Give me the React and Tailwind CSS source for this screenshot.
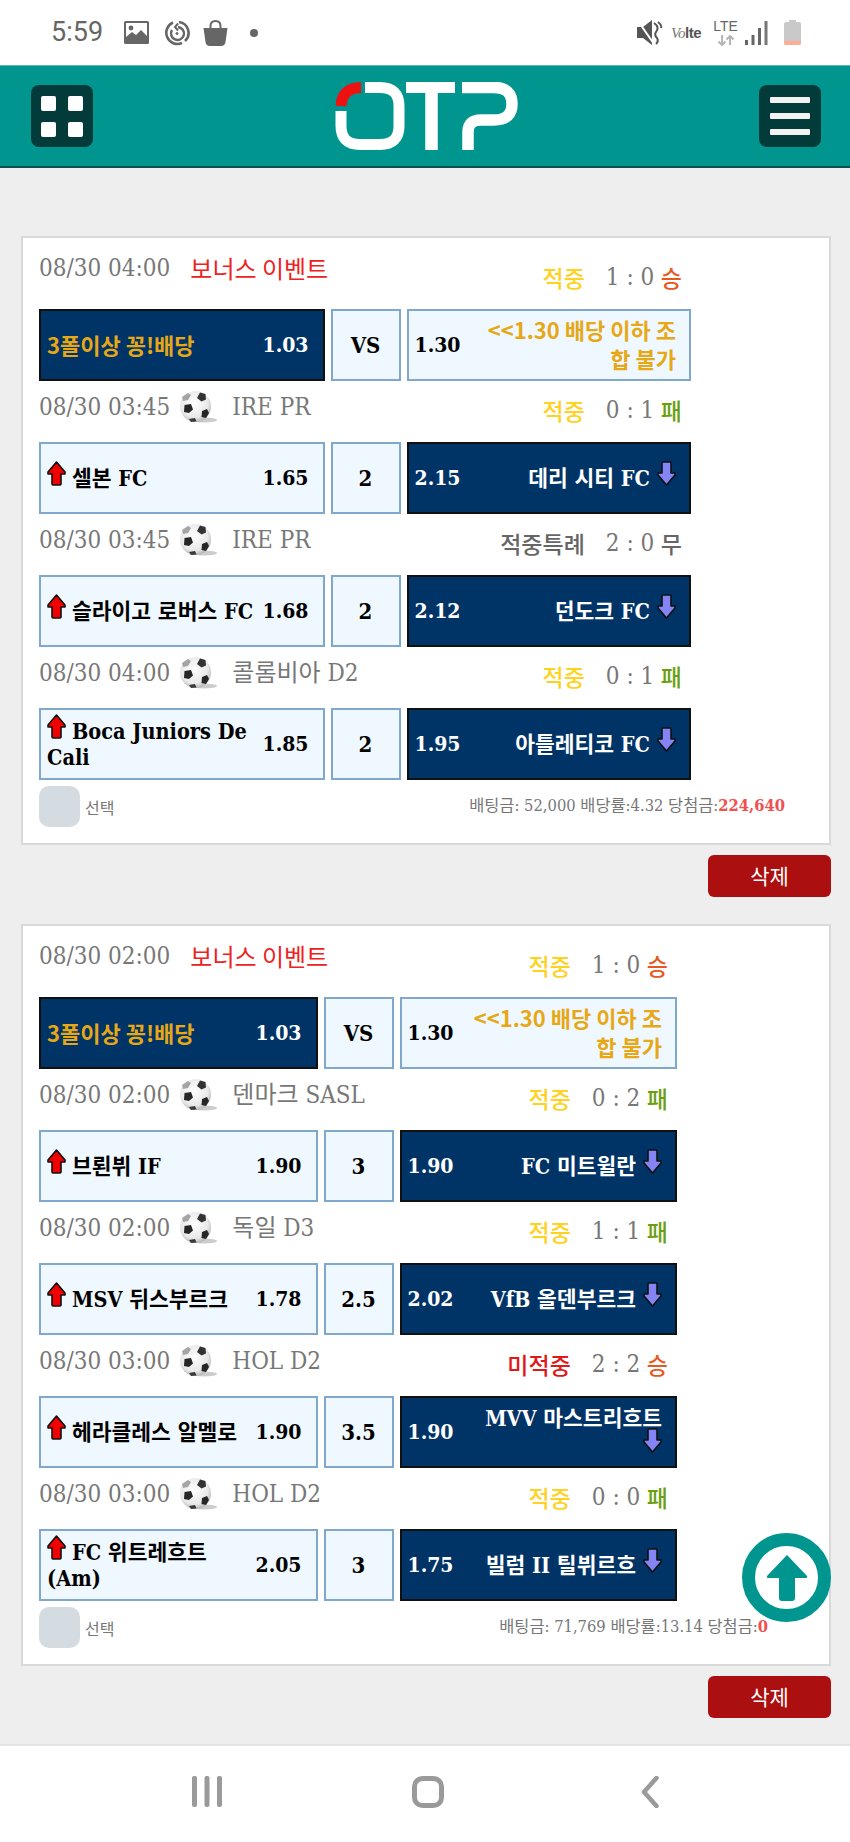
import React from "react";

const serif = "[font-family:'DejaVu_Serif_Condensed','DejaVu_Serif','Noto_Sans_CJK_KR',serif] [font-stretch:condensed]";
const sans = "[font-family:'Noto_Sans_CJK_KR','Noto_Sans',sans-serif]";

function UpArrow() {
  return (
    <svg width="19" height="25" viewBox="0 0 19 25" className="inline-block mr-[6px] -mt-[4px] align-baseline">
      <path d="M9.5 1 L18 11 V13 H14 V23 Q14 24 13 24 H6 Q5 24 5 23 V13 H1 V11 Z" fill="#f00000" stroke="#111" strokeWidth="1.6" strokeLinejoin="round" />
    </svg>
  );
}
function DownArrow() {
  return (
    <svg width="19" height="25" viewBox="0 0 19 25" className="inline-block ml-[7px] -mt-[4px] align-baseline">
      <path d="M9.5 24 L18 14 V12 H14 V2 Q14 1 13 1 H6 Q5 1 5 2 V12 H1 V14 Z" fill="#8484f4" stroke="#111" strokeWidth="1.6" strokeLinejoin="round" />
    </svg>
  );
}
function Ball() {
  return (
    <svg width="38" height="32" viewBox="0 0 38 32" className="shrink-0 ml-[9px]">
      <defs>
        <radialGradient id="bg" cx="0.45" cy="0.4" r="0.7">
          <stop offset="0" stopColor="#ffffff" />
          <stop offset="0.65" stopColor="#e8e8e8" />
          <stop offset="1" stopColor="#9a9a9a" />
        </radialGradient>
      </defs>
      <ellipse cx="25" cy="29" rx="13" ry="2.6" fill="#cccccc" />
      <circle cx="16.5" cy="15.5" r="15.5" fill="url(#bg)" />
      <path d="M21 1.5 L26.5 3 L27 8.5 L22.5 10.5 L18 7 Z" fill="#333" />
      <path d="M3 6 L9 2 L12 4 L9 9 L4 10 Z" fill="#a5a5a5" />
      <path d="M5.5 14 L12 13 L14 18.5 L10 22 L5 21 Z" fill="#262626" />
      <path d="M23 20 L28 18 L30 22 L27 27 L22.5 26 Z" fill="#262626" />
      <path d="M10 28 L16 27 L17.5 30.5 L12 31 Z" fill="#3a3a3a" />
    </svg>
  );
}

function Result({ label, labelClass, score, out, outClass }) {
  return (
    <div className={"flex items-center pr-[9px] " + serif}>
      <span className={"text-[23px] leading-[30px] font-medium " + sans + " " + labelClass}>{label}</span>
      <span className="ml-[21px] w-[48px] text-center whitespace-pre text-[24px] leading-[30px] text-[#777777]">{score}</span>
      <span className={"ml-[7px] text-[23px] leading-[30px] font-medium " + sans + " " + outClass}>{out}</span>
    </div>
  );
}

function Info({ first, date, bonus, league, result }) {
  const h = first ? "h-[71px]" : "h-[61px]";
  return (
    <div className={"flex items-center justify-between " + h}>
      <div className={"flex items-center " + (first ? "mb-[12px]" : "mb-[10px]")}>
        <span className={"text-[24px] leading-[30px] text-[#777777] whitespace-nowrap " + serif}>{date}</span>
        {bonus ? (
          <span className={"ml-[20px] text-[24px] leading-[30px] text-[#ee2222] " + sans}>{bonus}</span>
        ) : (
          <>
            <Ball />
            <span className={"ml-[15px] text-[24px] leading-[30px] text-[#777777] whitespace-nowrap " + serif}>{league}</span>
          </>
        )}
      </div>
      <div className={first ? "mt-[6px]" : "mb-[4px]"}>
        <Result {...result} />
      </div>
    </div>
  );
}

const light = "bg-[#f0f8ff] border-2 border-[#7fa8cc] text-black";
const dark = "bg-[#003366] border-2 border-[#111111] text-white";

function Row({ left, odd1, mid, odd2, right, leftDark, rightDark, bonus }) {
  return (
    <div className={"flex gap-[6px] h-[72px] font-bold text-[21.5px] leading-[26px] " + serif}>
      <div className={"flex-1 flex items-center pl-[6px] pr-[14px] " + (leftDark ? dark : light)}>
        <div className="flex-1 min-w-0 pr-[4px]">
          {bonus ? (
            <span className={"text-[22px] text-[#e6a817] " + sans}>{left}</span>
          ) : (
            <>
              <UpArrow />
              {left}
            </>
          )}
        </div>
        <span className="shrink-0 text-[21px]">{odd1}</span>
      </div>
      <div className={"w-[70px] flex items-center justify-center text-[22px] " + light}>{mid}</div>
      <div className={"flex-1 flex items-center pl-[6px] pr-[13px] " + (rightDark ? dark : light)}>
        <span className="shrink-0 text-[21px] mr-auto">{odd2}</span>
        <div className="w-[202px] shrink-0 text-right">
          {bonus ? (
            <span className={"text-[22px] text-[#e6a817] " + sans}>{right}</span>
          ) : (
            <>
              {right}
              <DownArrow />
            </>
          )}
        </div>
      </div>
    </div>
  );
}

const hit = (score, out) => ({
  label: "적중",
  labelClass: "text-[#ffd21f]",
  score,
  out,
  outClass: out === "승" ? "text-[#e8591f]" : "text-[#6aa010]",
});

function Card({ tableW, pr, games, amount, rate, win }) {
  return (
    <div className="bg-white border-2 border-[#d9d9d9] px-[16px] pb-[16px]">
      <div className={tableW}>
        {games.map((g, i) => (
          <div key={i}>
            <Info first={i === 0} date={g.date} bonus={g.bonus} league={g.league} result={g.result} />
            <Row {...g.row} />
          </div>
        ))}
      </div>
      <div className="flex items-center justify-between mt-[6px]" style={{ paddingRight: pr }}>
        <div className="flex items-center">
          <div className="w-[41px] h-[41px] rounded-[10px] bg-[#d5dce1]" />
          <span className={"ml-[5px] text-[16px] text-[#777777] " + sans}>선택</span>
        </div>
        <div className={"text-[16.4px] text-[#777777] whitespace-nowrap " + serif}>
          배팅금: {amount} 배당률:{rate} 당첨금:<b className="text-[#f05050]">{win}</b>
        </div>
      </div>
    </div>
  );
}

function DeleteBtn({ mb }) {
  return (
    <div className={"flex justify-end mt-[10px] " + mb}>
      <button className={"w-[123px] h-[42px] rounded-[6px] bg-[#ab0f0f] text-white text-[21px] " + sans}>삭제</button>
    </div>
  );
}

const bonusRow = {
  bonus: true,
  leftDark: true,
  left: "3폴이상 꽁!배당",
  odd1: "1.03",
  mid: "VS",
  odd2: "1.30",
  right: "<<1.30 배당 이하 조 합 불가",
};

const card1 = [
  { date: "08/30 04:00", bonus: "보너스 이벤트", result: hit("1 : 0", "승"), row: bonusRow },
  { date: "08/30 03:45", league: "IRE PR", result: hit("0 : 1", "패"), row: { left: "셀본 FC", odd1: "1.65", mid: "2", odd2: "2.15", right: "데리 시티 FC", rightDark: true } },
  { date: "08/30 03:45", league: "IRE PR", result: { label: "적중특례", labelClass: "text-[#666666]", score: "2 : 0", out: "무", outClass: "text-[#666666]" }, row: { left: "슬라이고 로버스 FC", odd1: "1.68", mid: "2", odd2: "2.12", right: "던도크 FC", rightDark: true } },
  { date: "08/30 04:00", league: "콜롬비아 D2", result: hit("0 : 1", "패"), row: { left: "Boca Juniors De Cali", odd1: "1.85", mid: "2", odd2: "1.95", right: "아틀레티코 FC", rightDark: true } },
];
const card2 = [
  { date: "08/30 02:00", bonus: "보너스 이벤트", result: hit("1 : 0", "승"), row: bonusRow },
  { date: "08/30 02:00", league: "덴마크 SASL", result: hit("0 : 2", "패"), row: { left: "브뢴뷔 IF", odd1: "1.90", mid: "3", odd2: "1.90", right: "FC 미트윌란", rightDark: true } },
  { date: "08/30 02:00", league: "독일 D3", result: hit("1 : 1", "패"), row: { left: "MSV 뒤스부르크", odd1: "1.78", mid: "2.5", odd2: "2.02", right: "VfB 올덴부르크", rightDark: true } },
  { date: "08/30 03:00", league: "HOL D2", result: { label: "미적중", labelClass: "text-[#e01818]", score: "2 : 2", out: "승", outClass: "text-[#e8591f]" }, row: { left: "헤라클레스 알멜로", odd1: "1.90", mid: "3.5", odd2: "1.90", right: "MVV 마스트리흐트", rightDark: true } },
  { date: "08/30 03:00", league: "HOL D2", result: hit("0 : 0", "패"), row: { left: "FC 위트레흐트 (Am)", odd1: "2.05", mid: "3", odd2: "1.75", right: "빌럼 II 틸뷔르흐", rightDark: true } },
];

function StatusBar() {
  return (
    <div className="h-[65px] bg-white flex items-center pl-[51px] pr-[49px] shrink-0">
      <span className="[font-family:Roboto,sans-serif] text-[27px] text-[#666666] w-[73px]">5:59</span>
      <svg width="25" height="23" viewBox="0 0 25 23"><rect width="25" height="23" rx="1.5" fill="#666" /><rect x="2" y="2" width="21" height="19" fill="#fff" /><circle cx="7" cy="7" r="2.4" fill="#666" /><path d="M2 21 V16 L8 11 L12 14 L17 9 L23 15 V21 Z" fill="#666" /></svg>
      <svg width="26" height="26" viewBox="0 0 26 26" className="ml-[15px]" fill="none" stroke="#666"><path d="M15 2 A11 11 0 0 1 21 21" strokeWidth="2.6" /><path d="M18 23 A11 11 0 0 1 9 2.5" strokeWidth="2.6" /><path d="M8 10 A6.5 6.5 0 1 0 14 7" strokeWidth="2.4" /><path d="M14 3.5 L11 7 L14 10.5" strokeWidth="2" /><circle cx="13" cy="13.5" r="1" fill="#666" /></svg>
      <svg width="25" height="26" viewBox="0 0 25 26" className="ml-[13px]"><path d="M0.5 8 H24.5 L22.5 22 Q22 26 18 26 H7 Q3 26 2.5 22 Z" fill="#666" /><path d="M7.5 9 V6 Q7.5 1 12.5 1 Q17.5 1 17.5 6 V9" fill="none" stroke="#666" strokeWidth="2" /></svg>
      <div className="ml-[22px] w-[8px] h-[8px] rounded-full bg-[#666666]" />
      <div className="flex-1" />
      <svg width="26" height="25" viewBox="0 0 26 25" fill="none"><path d="M0 7 H6 L15 0 V25 L6 18 H0 Z" fill="#555" /><path d="M1 1 L17 24" stroke="#fff" strokeWidth="2" /><path d="M17 3 Q23 7 19 12 Q17 15 20 18 Q22 21 19 24" stroke="#555" strokeWidth="2" /><path d="M21 2 Q25 5 24 8" stroke="#555" strokeWidth="2" /></svg>
      <span className="ml-[8px] w-[33px] [font-family:'Liberation_Sans',sans-serif] text-[15px] leading-none tracking-[-0.5px] text-[#555555] font-bold whitespace-nowrap"><i className="font-normal text-[#777777] [font-family:'Liberation_Serif',serif]">Vo</i>lte</span>
      <div className="ml-[9px] w-[25px] flex flex-col items-center">
        <span className="[font-family:'Liberation_Sans',sans-serif] text-[14px] leading-[13px] text-[#666666]">LTE</span>
        <svg width="20" height="11" viewBox="0 0 20 11" fill="none" className="mt-[2px]"><path d="M6 0 V10 M2.5 6.5 L6 10 L9.5 6.5" stroke="#b5b5b5" strokeWidth="2" /><path d="M14 10 V1 M10.5 4.5 L14 1 L17.5 4.5" stroke="#b5b5b5" strokeWidth="2" /></svg>
      </div>
      <svg width="23" height="24" viewBox="0 0 23 24" className="ml-[7px]"><rect x="0" y="19" width="3" height="5" fill="#666" /><rect x="6.5" y="14" width="3" height="10" fill="#666" /><rect x="13" y="7" width="3" height="17" fill="#666" /><rect x="19.5" y="0" width="3" height="24" fill="#777" /></svg>
      <svg width="17" height="25" viewBox="0 0 17 25" className="ml-[16px]"><rect x="5" y="0" width="7" height="3" fill="#c9c9c9" /><rect x="0" y="2" width="17" height="23" rx="2" fill="#c9c9c9" /><path d="M0 21 H17 V23 Q17 25 15 25 H2 Q0 25 0 23 Z" fill="#ffae96" /></svg>
    </div>
  );
}

function TopBar() {
  return (
    <div className="h-[103px] bg-[#00968f] border-t border-[#59b8b2] border-b-2 border-b-[#0a4f4c] flex items-center justify-between pl-[31px] pr-[29px] shrink-0 relative">
      <div className="w-[62px] h-[62px] rounded-[8px] bg-[#033b3b] grid grid-cols-[15px_15px] gap-x-[12px] gap-y-[11px] content-center justify-center">
        <div className="w-[15px] h-[15px] rounded-[2px] bg-white" />
        <div className="w-[15px] h-[15px] rounded-[2px] bg-white" />
        <div className="w-[15px] h-[15px] rounded-[2px] bg-white" />
        <div className="w-[15px] h-[15px] rounded-[2px] bg-white" />
      </div>
      <svg width="184" height="68" viewBox="0 0 184 68" fill="none">
        <path d="M31 5.5 H46 Q65 5.5 65 24 V44 Q65 62.5 46 62.5 H26 Q7 62.5 7 44 V29" stroke="#fff" strokeWidth="11" />
        <path d="M27 5.5 Q8 6 7 24" stroke="#ee1111" strokeWidth="11" />
        <path d="M72 5.5 H121" stroke="#fff" strokeWidth="11" />
        <path d="M97.5 5 V68" stroke="#fff" strokeWidth="12.5" />
        <path d="M128 5.5 H160 Q178 5.5 178 22 Q178 38 160 38 H147 Q134 38 134 50 V68" stroke="#fff" strokeWidth="11.5" />
      </svg>
      <div className="w-[62px] h-[62px] rounded-[8px] bg-[#033b3b] flex flex-col items-center justify-center gap-[10px]">
        <div className="w-[40px] h-[6px] rounded-[1px] bg-[#f2f2f2]" />
        <div className="w-[40px] h-[6px] rounded-[1px] bg-[#f2f2f2]" />
        <div className="w-[40px] h-[6px] rounded-[1px] bg-[#f2f2f2]" />
      </div>
    </div>
  );
}

function NavBar() {
  return (
    <div className="h-[98px] bg-white border-t-2 border-[#e3e3e3] flex items-center shrink-0 pb-[4px]">
      <svg width="30" height="32" viewBox="0 0 30 32" className="ml-[192px]" fill="#9a9a9a"><rect x="0" width="5" height="31" rx="2" /><rect x="12.5" width="5" height="31" rx="2" /><rect x="25" width="5" height="31" rx="2" /></svg>
      <svg width="32" height="32" viewBox="0 0 32 32" className="ml-[190px]" fill="none"><rect x="2.5" y="2.5" width="27" height="27" rx="8" stroke="#9a9a9a" strokeWidth="5" /></svg>
      <svg width="18" height="32" viewBox="0 0 18 32" className="ml-[197px]" fill="none"><path d="M15.5 2 L3 16 L15.5 30" stroke="#9a9a9a" strokeWidth="4.5" strokeLinecap="round" strokeLinejoin="round" /></svg>
    </div>
  );
}

export default function App() {
  return (
    <div className="relative w-[850px] h-[1842px] flex flex-col bg-[#eeeeee] overflow-hidden">
      <StatusBar />
      <TopBar />
      <div className="flex-1 min-h-0 pl-[21px] pr-[19px] pt-[68px] overflow-hidden">
        <Card tableW="w-[652px]" pr="28px" games={card1} amount="52,000" rate="4.32" win="224,640" />
        <DeleteBtn mb="mb-[27px]" />
        <Card tableW="w-[638px]" pr="45px" games={card2} amount="71,769" rate="13.14" win="0" />
        <DeleteBtn mb="" />
      </div>
      <NavBar />
      <div className="absolute left-[742px] top-[1533px] w-[89px] h-[89px] rounded-full bg-white border-[13px] border-[#00968f] flex items-center justify-center">
        <svg width="42" height="46" viewBox="0 0 42 46"><path d="M21 0 L41 21 Q42 23 39 23 H29 V43 Q29 46 26 46 H16 Q13 46 13 43 V23 H3 Q0 23 1 21 Z" fill="#00968f" /></svg>
      </div>
    </div>
  );
}
